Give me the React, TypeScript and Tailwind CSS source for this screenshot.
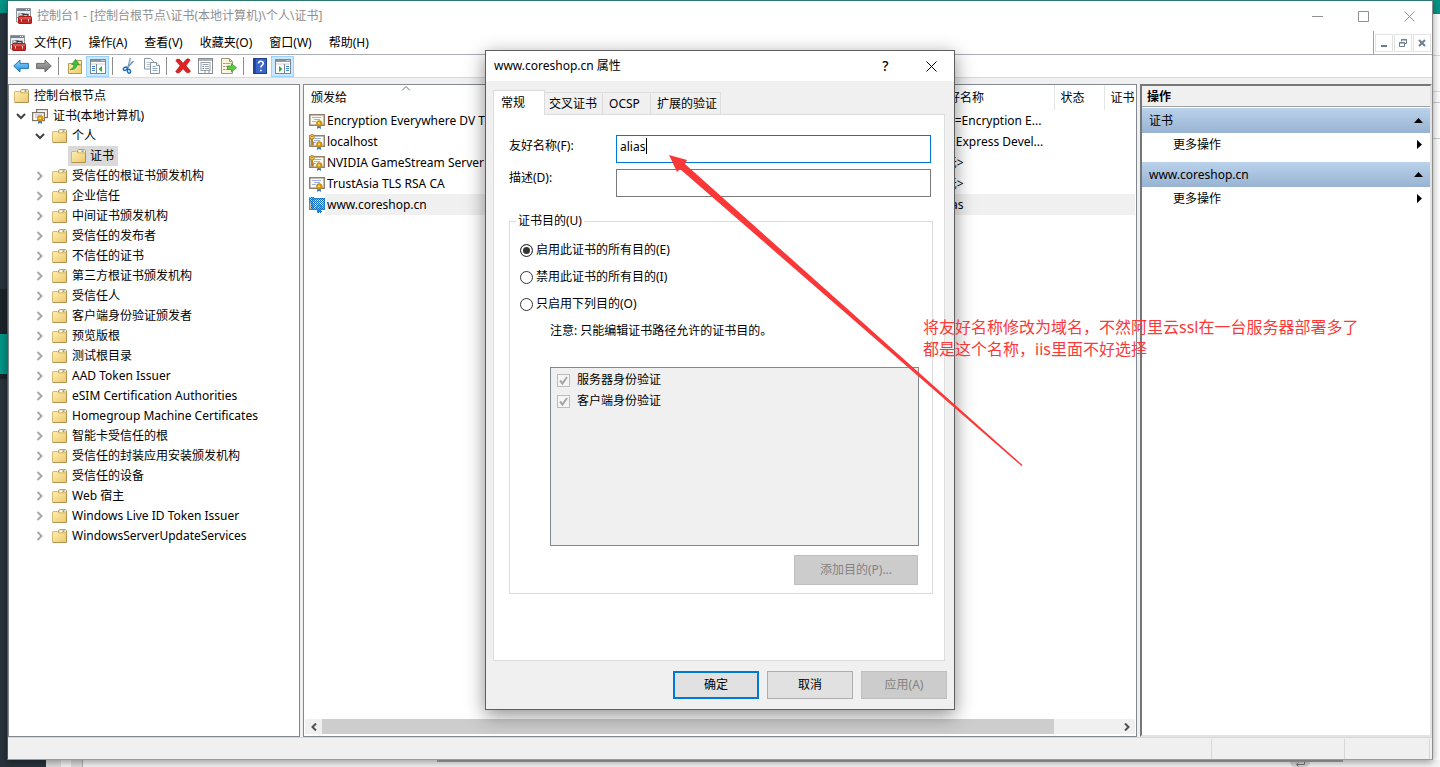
import React from "react";

type IconProps = { className?: string };

const Chevron = ({ open }: { open: boolean }) => (
  <svg viewBox="0 0 10 10" className="h-[10px] w-[10px]" fill="none" strokeWidth="2">
    {open ? <path d="M1 3l4 4 4-4" stroke="#404040" /> : <path d="M2.5 1l4 4-4 4" stroke="#a6a6a6" />}
  </svg>
);

const FolderIcon = () => (
  <svg viewBox="0 0 15 14" className="h-[14px] w-[15px] shrink-0">
    <path d="M6.500 3.500V1.500l1-1h6l1 1v4h-8z" fill="#efd892" stroke="#b9a063" />
    <path d="M8 2.200h5.500" stroke="#fff" strokeWidth="1.400" />
    <path d="M10.500 2.200h2" stroke="#4f95e0" strokeWidth="1.400" />
    <path d="M1 2.500h4.500l1.300 1.500H14v9H1z" fill="url(#folderFace)" />
    <path d="M.5 13V3l.5-.5h4.500L6.800 4H14" fill="none" stroke="#d6b870" />
    <path d="M14.500 4.500v9H.500" fill="none" stroke="#b0924e" />
  </svg>
);

const Seal = () => (
  <>
    <path d="M8.500 12l-.5 4 2-1.300 2 1.300-.3-4z" fill="#1f6fe0" />
    <circle cx="10.300" cy="10.500" r="2.900" fill="#d99a0c" stroke="#b67a08" strokeWidth=".6" />
    <circle cx="10" cy="10.200" r="1" fill="#ffe07a" />
  </>
);

const CertIcon = ({ keyed = false, selected = false }: { keyed?: boolean; selected?: boolean }) => (
  <svg viewBox="0 0 16 16" className="h-4 w-4 shrink-0">
    <rect x=".75" y="1.750" width="14.500" height="10.500" fill="#fbfaf3" stroke="#8f8370" strokeWidth="1.500" />
    <path d="M3 4.500h9M5 6.500h6M3 8.500h4" stroke="#a4b0dc" strokeWidth="1" />
    <Seal />
    {keyed && (
      <>
        <path d="M3 4v7.500M3 8.500h1.800M3 10.500h1.800" stroke="#b57d14" strokeWidth="1.800" />
        <circle cx="3" cy="2.800" r="2.300" fill="#f7d779" stroke="#b57d14" />
        <circle cx="3" cy="2.400" r=".7" fill="#6b4a08" />
      </>
    )}
    {selected && <path d="M1 0h4l1 1h10v12h-3v3H8v-3H2V6L0 4V1z" fill="url(#selectedDots)" />}
  </svg>
);

const CertStoreIcon = () => (
  <svg viewBox="0 0 16 16" className="h-4 w-4 shrink-0">
    <rect x="4.600" y="1.600" width="10.800" height="8" fill="#fbfaf3" stroke="#80776a" strokeWidth="1.200" />
    <rect x=".6" y="4.600" width="11.800" height="8" fill="#fbfaf3" stroke="#80776a" strokeWidth="1.200" />
    <path d="M3 7h7M3 9h4" stroke="#a4b0dc" />
    <g transform="translate(-2 0)">
      <Seal />
    </g>
  </svg>
);

const ConsoleIcon = ({ className = "" }: IconProps) => (
  <svg viewBox="0 0 16 16" className={`h-4 w-4 shrink-0 ${className}`}>
    <path d="M.5.500h14v9H.500z" fill="#e9edf0" stroke="#8b959d" />
    <path d="M.5 9v5h2" fill="none" stroke="#8b959d" />
    <path d="M1 2h13" stroke="#75828d" strokeWidth="2" />
    <path d="M10 1.500h1M12 1.500h1" stroke="#fff" />
    <path d="M3 5v5M4.500 5.500h4M4 8l2-1" stroke="#77838d" fill="none" />
    <path d="M7 8.500V6.500h5v2" fill="none" stroke="#3c3c3c" strokeWidth="1.300" />
    <path d="M2 9.500L3 8h12l1 1.500V15l-1 1H3l-1-1z" fill="#a31d1b" />
    <path d="M3 9h12v2.500H3z" fill="#e0524b" />
    <path d="M3 12.500h12V15H3z" fill="#c42a26" />
    <path d="M5.500 11v2.500M12.500 11v2.500" stroke="#e9d6d6" />
  </svg>
);

const ArrowIcon = ({ back }: { back: boolean }) => (
  <svg viewBox="0 0 16 14" className="h-[14px] w-4">
    {back ? (
      <path d="M.7 7L7 1v3.400h8.400v5.200H7V13z" fill="url(#blueArrow)" stroke="#2476b8" />
    ) : (
      <path d="M15.300 7L9 1v3.400H.6v5.200H9V13z" fill="url(#greyArrow)" stroke="#6d6d6d" />
    )}
  </svg>
);

const FolderUpIcon = () => (
  <svg viewBox="0 0 16 16" className="h-4 w-4">
    <path d="M8.500 6V4l1-1.500h5V7h-6z" fill="#f4e3ac" stroke="#b99a52" />
    <path d="M1.500 5.500h5l1 1.500h7v8.500h-13z" fill="url(#folderFace)" stroke="#b99a52" />
    <path d="M3 11.500c2.700-.8 4-2.500 3.900-5H4.600L8.600 1.300l3.600 5.200H9.800c0 3.700-2.500 5.400-6.800 5z" fill="#3fc23a" stroke="#1f8c22" strokeWidth=".6" />
  </svg>
);

const PaneIcon = ({ left }: { left: boolean }) => (
  <svg viewBox="0 0 16 15" className="h-[15px] w-4">
    <rect x=".5" y=".5" width="15" height="14" fill="#fff" stroke="#7e8791" />
    <path d="M1 2h14" stroke="#8d969f" strokeWidth="2" />
    <path d="M11.500 1.500h1M13.500 1.500h1" stroke="#fff" />
    <path d="M1 5h14" stroke="#c9ced3" />
    {left ? (
      <>
        <path d="M6.500 5v9.500" stroke="#7e8791" />
        <path d="M2 7.500h3M2 9.500h3M2 11.500h3" stroke="#3c83cf" />
        <path d="M12 7v6L8.500 10z" fill="#38a838" />
      </>
    ) : (
      <>
        <path d="M9.500 5v9.500" stroke="#7e8791" />
        <path d="M11 7.500h3M11 9.500h3M11 11.500h3" stroke="#3c83cf" />
        <path d="M4 7v6l3.500-3z" fill="#38a838" />
      </>
    )}
  </svg>
);

const CutIcon = () => (
  <svg viewBox="0 0 16 16" className="h-4 w-4" fill="none">
    <path d="M9.500 0L7 10M12.500 3L5.500 10.500" stroke="#7d9ab5" strokeWidth="1.700" />
    <path d="M9.700 1L8.500 6" stroke="#cfdde9" strokeWidth=".8" />
    <ellipse cx="4.300" cy="10.800" rx="2" ry="1.500" transform="rotate(-25 4.300 10.800)" stroke="#1f6db8" strokeWidth="1.500" />
    <ellipse cx="8" cy="13.200" rx="1.500" ry="2" transform="rotate(-20 8 13.200)" stroke="#1f6db8" strokeWidth="1.500" />
  </svg>
);

const CopyIcon = () => (
  <svg viewBox="0 0 16 16" className="h-4 w-4" fill="#fff" stroke="#8793a0">
    <path d="M.5.500h6l3 3v7.500h-9z" />
    <path d="M2.500 4.500h4M2.500 6.500h5M2.500 8.500h5" stroke="#b7c3cf" />
    <path d="M6.500 4.500h6l3 3v8h-9z" />
    <path d="M12.500 4.500v3h3" />
    <path d="M8.500 8.500h3M8.500 10.500h5M8.500 12.500h5" stroke="#8ba6c2" />
  </svg>
);

const DeleteIcon = () => (
  <svg viewBox="0 0 16 16" className="h-4 w-4">
    <path d="M.8 2.500C2.500.6 4 .8 5.200 2L8 5.200 11.500 1.300c1-.8 2.700-.5 3.700.8L11 7.800l4.500 5.200c-1 2-2.700 2.200-4 1.400L8 10.800l-3.500 3.800c-1.200.8-2.900.4-3.800-1.200l4.400-5.600z" fill="#e02222" stroke="#a51212" strokeWidth=".6" />
  </svg>
);

const PropertiesIcon = () => (
  <svg viewBox="0 0 16 16" className="h-4 w-4" fill="none">
    <rect x=".5" y=".5" width="14" height="15" fill="#fff" stroke="#858b91" />
    <path d="M1 2h13" stroke="#aeb4ba" strokeWidth="2" />
    <rect x="3" y="4.500" width="9" height="8" stroke="#9aa3ab" />
    <path d="M4.500 6.500h6M7 8.500h4M7 10.500h4" stroke="#9aa3ab" />
    <path d="M4.500 8.500h1.500M4.500 10.500h1.500" stroke="#3c83cf" />
    <path d="M6 14h2M10 14h2" stroke="#8b9299" />
  </svg>
);

const ExportIcon = () => (
  <svg viewBox="0 0 16 16" className="h-4 w-4" fill="none">
    <path d="M.5.500h8l3 3v12H.500z" fill="#fbf6dc" stroke="#a0987c" />
    <path d="M8.500.500v3h3" stroke="#a0987c" />
    <path d="M2.500 5.500h1M2.500 8.500h1M2.500 11.500h1" stroke="#3f3f3f" />
    <path d="M4.500 5.500h5M4.500 8.500h3M4.500 11.500h3" stroke="#9aa3ab" />
    <path d="M6.500 8h4V5.500l5 4.300-5 4.200v-2.500h-4z" fill="#5dcb43" stroke="#2e9427" strokeWidth=".7" />
  </svg>
);

const HelpIcon = () => (
  <svg viewBox="0 0 14 16" className="h-4 w-[14px]" fill="none">
    <rect x=".5" y=".5" width="13" height="15" fill="#3a64c8" stroke="#1f3f8f" />
    <path d="M2 1v14" stroke="#1f3f8f" strokeWidth="1.500" />
    <path d="M5.500 5.500c.2-3 5-2.800 4.700 0-.2 1.800-2.300 1.900-2.300 4" stroke="#fff" strokeWidth="1.600" />
    <path d="M7 12.500h1.800" stroke="#fff" strokeWidth="1.700" />
  </svg>
);

const Defs = () => (
  <svg className="absolute h-0 w-0" aria-hidden="true">
    <defs>
      <linearGradient id="folderFace" x1="0" y1="0" x2="1" y2="1">
        <stop offset="0" stopColor="#fdeeb2" />
        <stop offset="1" stopColor="#eec96c" />
      </linearGradient>
      <linearGradient id="blueArrow" x1="0" y1="0" x2="0" y2="1">
        <stop offset="0" stopColor="#8fd6fb" />
        <stop offset="1" stopColor="#1e8be0" />
      </linearGradient>
      <linearGradient id="greyArrow" x1="0" y1="0" x2="0" y2="1">
        <stop offset="0" stopColor="#b0b0b0" />
        <stop offset="1" stopColor="#6f6f6f" />
      </linearGradient>
      <pattern id="selectedDots" width="2" height="2" patternUnits="userSpaceOnUse">
        <rect width="1" height="1" fill="#0f6fc0" />
        <rect x="1" y="1" width="1" height="1" fill="#0f6fc0" />
      </pattern>
    </defs>
  </svg>
);

const menus = ["文件(F)", "操作(A)", "查看(V)", "收藏夹(O)", "窗口(W)", "帮助(H)"];

const stores = [
  "受信任的根证书颁发机构",
  "企业信任",
  "中间证书颁发机构",
  "受信任的发布者",
  "不信任的证书",
  "第三方根证书颁发机构",
  "受信任人",
  "客户端身份验证颁发者",
  "预览版根",
  "测试根目录",
  "AAD Token Issuer",
  "eSIM Certification Authorities",
  "Homegroup Machine Certificates",
  "智能卡受信任的根",
  "受信任的封装应用安装颁发机构",
  "受信任的设备",
  "Web 宿主",
  "Windows Live ID Token Issuer",
  "WindowsServerUpdateServices",
];

const certificates = [
  { name: "Encryption Everywhere DV T", friendly: "CN=Encryption E...", keyed: false, selected: false },
  { name: "localhost", friendly: "IIS Express Devel...", keyed: true, selected: false },
  { name: "NVIDIA GameStream Server", friendly: "<无>", keyed: true, selected: false },
  { name: "TrustAsia TLS RSA CA", friendly: "<无>", keyed: false, selected: false },
  { name: "www.coreshop.cn", friendly: "alias", keyed: true, selected: true },
];

function ToolButton({ label, active = false, children }: { label: string; active?: boolean; children: React.ReactNode }) {
  return (
    <button
      type="button"
      aria-label={label}
      className={
        active
          ? "flex h-[21px] w-[23px] items-center justify-center border border-[#99d1ff] bg-[#cce8ff]"
          : "flex h-[21px] w-[23px] items-center justify-center"
      }
    >
      {children}
    </button>
  );
}

const Separator = () => <span className="ml-[3px] mr-1 h-[18px] w-px bg-[#8c8c8c]" />;

function TitleBar() {
  return (
    <header className="flex h-[30px] items-center bg-white pl-2 text-[#8f8f8f]">
      <ConsoleIcon />
      <h1 className="ml-[5px] flex-1">控制台1 - [控制台根节点\证书(本地计算机)\个人\证书]</h1>
      <button type="button" aria-label="最小化" className="flex h-full w-[46px] items-center justify-center">
        <svg viewBox="0 0 11 11" className="h-[11px] w-[11px]" stroke="#8f8f8f"><path d="M0 5.500h11" /></svg>
      </button>
      <button type="button" aria-label="最大化" className="flex h-full w-[46px] items-center justify-center">
        <svg viewBox="0 0 11 11" className="h-[11px] w-[11px]" fill="none" stroke="#8f8f8f"><path d="M.5.500h10v10H.500z" /></svg>
      </button>
      <button type="button" aria-label="关闭" className="flex h-full w-[46px] items-center justify-center">
        <svg viewBox="0 0 11 11" className="h-[11px] w-[11px]" stroke="#8f8f8f"><path d="M.5.500l10 10M10.500.500l-10 10" /></svg>
      </button>
    </header>
  );
}

function MenuBar() {
  const box = "flex h-[18px] w-[18px] items-center justify-center border border-[#e3e3e3] bg-white";
  return (
    <div className="flex h-6 items-stretch border-b border-[#acacb4] bg-white pl-[2px]">
      <ConsoleIcon className="self-center" />
      <nav className="ml-2 flex flex-1 items-center gap-[17px]">
        {menus.map((m) => (
          <button type="button" key={m}>{m}</button>
        ))}
      </nav>
      <div className="flex items-center gap-px border-l border-[#a0a0a0] px-px">
        <button type="button" aria-label="最小化子窗口" className={box}>
          <svg viewBox="0 0 8 8" className="h-2 w-2" stroke="#6c7f91" strokeWidth="2"><path d="M1 7h6" /></svg>
        </button>
        <button type="button" aria-label="还原子窗口" className={box}>
          <svg viewBox="0 0 8 8" className="h-2 w-2" fill="none" stroke="#6c7f91">
            <path d="M2.500 2.500v-2h5v4h-2M2 1h6M.5 3.500h5v4h-5zM.500 4h5" />
          </svg>
        </button>
        <button type="button" aria-label="关闭子窗口" className={box}>
          <svg viewBox="0 0 8 8" className="h-2 w-2" stroke="#6c7f91" strokeWidth="2"><path d="M1 1l6 6M7 1L1 7" /></svg>
        </button>
      </div>
    </div>
  );
}

function ToolBar() {
  return (
    <div className="flex h-[23px] items-center border-b border-[#d9d9d9] bg-white pl-px">
      <ToolButton label="后退"><ArrowIcon back /></ToolButton>
      <ToolButton label="前进"><ArrowIcon back={false} /></ToolButton>
      <Separator />
      <ToolButton label="向上一级"><FolderUpIcon /></ToolButton>
      <ToolButton label="显示控制台树" active><PaneIcon left /></ToolButton>
      <Separator />
      <ToolButton label="剪切"><CutIcon /></ToolButton>
      <ToolButton label="复制"><CopyIcon /></ToolButton>
      <Separator />
      <ToolButton label="删除"><DeleteIcon /></ToolButton>
      <ToolButton label="属性"><PropertiesIcon /></ToolButton>
      <ToolButton label="导出列表"><ExportIcon /></ToolButton>
      <Separator />
      <ToolButton label="帮助"><HelpIcon /></ToolButton>
      <ToolButton label="显示操作窗格" active><PaneIcon left={false} /></ToolButton>
    </div>
  );
}

function TreePane() {
  return (
    <section className="w-[292px] shrink-0 border border-[#828790] bg-white pt-px" aria-label="控制台树">
      <ul className="leading-5">
        <li className="flex h-5 items-center gap-[5px] pl-[5px]"><FolderIcon />控制台根节点</li>
        <li className="flex h-5 items-center pl-[7px]">
          <Chevron open />
          <span className="ml-[6px] mr-[5px]"><CertStoreIcon /></span>证书(本地计算机)
        </li>
        <li className="flex h-5 items-center pl-[26px]">
          <Chevron open />
          <span className="ml-[7px] mr-[5px]"><FolderIcon /></span>个人
        </li>
        <li className="flex h-5 items-center pl-[59px]">
          <span className="flex h-5 items-center gap-1 bg-[#d9d9d9] pl-[3px] pr-1"><FolderIcon />证书</span>
        </li>
        {stores.map((s) => (
          <li key={s} className="flex h-5 items-center pl-[26px]">
            <Chevron open={false} />
            <span className="ml-[7px] mr-[5px]"><FolderIcon /></span>{s}
          </li>
        ))}
      </ul>
    </section>
  );
}

function ListPane() {
  return (
    <section className="flex min-w-0 flex-1 flex-col border border-[#828790] bg-white px-px pb-[2px]" aria-label="证书列表">
      <div className="min-h-0 flex-1 overflow-hidden">
        <table className="w-full table-fixed border-collapse whitespace-nowrap text-left">
          <colgroup>
            <col className="w-[201px]" />
            <col />
            <col className="w-[125px]" />
            <col className="w-[50px]" />
            <col className="w-[31px]" />
          </colgroup>
          <thead>
            <tr className="h-[25px]">
              <th className="relative pl-[6px] font-normal">
                颁发给
                <svg viewBox="0 0 9 5" className="absolute left-1/2 top-px h-[5px] w-[9px] -translate-x-1/2" fill="none" stroke="#6d6d6d">
                  <path d="M.5 4.500l4-4 4 4" />
                </svg>
              </th>
              <th />
              <th className="border-r border-[#e5e5e5] pl-[7px] font-normal">友好名称</th>
              <th className="border-r border-[#e5e5e5] pl-[6px] font-normal">状态</th>
              <th className="pl-[6px] font-normal">证书</th>
            </tr>
          </thead>
          <tbody>
            {certificates.map((c) => {
              const shade = c.selected ? "bg-[#f0f0f0]" : "";
              return (
                <tr key={c.name} className="h-[21px]">
                  <td className="p-0">
                    <div className="flex h-[21px] items-center pl-1">
                      <CertIcon keyed={c.keyed} selected={c.selected} />
                      <span className={`flex h-[21px] min-w-0 flex-1 items-center overflow-hidden pl-[2px] ${shade}`}>{c.name}</span>
                    </div>
                  </td>
                  <td className={shade} />
                  <td className={`py-0 pl-[9px] ${shade}`}>{c.friendly}</td>
                  <td className={shade} />
                  <td className={shade} />
                </tr>
              );
            })}
          </tbody>
        </table>
      </div>
      <div className="flex h-[15px] items-center bg-[#f0f0f0]">
        <button type="button" aria-label="向左滚动" className="flex w-[17px] justify-center">
          <svg viewBox="0 0 8 8" className="h-2 w-2" fill="none" stroke="#505050" strokeWidth="2"><path d="M6 .5L2.500 4 6 7.500" /></svg>
        </button>
        <div className="h-full flex-1"><div className="h-full w-[92%] bg-[#cdcdcd]" /></div>
        <button type="button" aria-label="向右滚动" className="flex w-[17px] justify-center">
          <svg viewBox="0 0 8 8" className="h-2 w-2" fill="none" stroke="#505050" strokeWidth="2"><path d="M2 .5L5.500 4 2 7.500" /></svg>
        </button>
      </div>
    </section>
  );
}

function ActionGroup({ title }: { title: string }) {
  return (
    <div className="mb-[6px]">
      <button type="button" className="flex h-[25px] w-full items-center justify-between bg-linear-to-b from-[#bad2eb] to-[#98b3d2] pl-[7px] pr-[7px]">
        {title}
        <svg viewBox="0 0 9 5" className="h-[5px] w-[9px]"><path d="M0 5L4.500 0 9 5z" /></svg>
      </button>
      <button type="button" className="flex h-[23px] w-full items-center justify-between pl-[31px] pr-2">
        更多操作
        <svg viewBox="0 0 5 9" className="h-[9px] w-[5px]"><path d="M0 0l5 4.500L0 9z" /></svg>
      </button>
    </div>
  );
}

function ActionsPane() {
  return (
    <section className="w-[292px] shrink-0 border-2 border-b-[#e3e3e3] border-l-[#777] border-r-[#e3e3e3] border-t-[#777] bg-white">
      <h2 className="mb-px flex h-[21px] items-center border-b border-[#a0a0a0] bg-[#f0f0f0] pl-[5px] pt-[2px] font-bold">操作</h2>
      <ActionGroup title="证书" />
      <ActionGroup title="www.coreshop.cn" />
    </section>
  );
}

function PropertiesDialog() {
  const tab = "-mb-px flex h-[23px] items-center border border-b-[#dcdcdc] border-l-0 border-[#dcdcdc] bg-[#f0f0f0]";
  return (
    <div role="dialog" aria-label="www.coreshop.cn 属性" className="flex w-full flex-col border border-[#5f5f5f] bg-[#f0f0f0] shadow-[0_5px_18px_rgba(0,0,0,0.45)]">
      <div className="flex h-[30px] items-center bg-white pl-2">
        <h2 className="flex-1">www.coreshop.cn 属性</h2>
        <button type="button" aria-label="帮助" className="w-[45px] text-sm font-medium">?</button>
        <button type="button" aria-label="关闭" className="flex w-[46px] justify-center">
          <svg viewBox="0 0 11 11" className="h-[11px] w-[11px]" stroke="#000"><path d="M.5.500l10 10M10.500.500l-10 10" /></svg>
        </button>
      </div>
      <div className="flex flex-col px-[7px] pt-[9px]">
        <div role="tablist" className="flex items-end">
          <button type="button" role="tab" aria-selected="true" className="relative z-10 -mb-px flex h-[25px] w-[52px] items-center border border-b-0 border-[#dcdcdc] bg-white pb-px pl-[7px]">常规</button>
          <button type="button" role="tab" aria-selected="false" className={`${tab} pl-1 pr-[5px]`}>交叉证书</button>
          <button type="button" role="tab" aria-selected="false" className={`${tab} w-12 pl-[6px]`}>OCSP</button>
          <button type="button" role="tab" aria-selected="false" className={`${tab} pl-[6px] pr-[3px]`}>扩展的验证</button>
        </div>
        <div role="tabpanel" className="mr-[2px] h-[547px] border border-[#dcdcdc] bg-white pl-[15px] pr-[11px] pt-5">
          <div className="flex h-7 pr-[2px]">
            <label htmlFor="friendly" className="w-[107px] leading-[22px]">友好名称(F):</label>
            <div className="relative flex flex-1">
              <input id="friendly" defaultValue="alias" className="w-full border border-[#0078d7] bg-white pb-[5px] pl-[3px] outline-none" />
              <span className="absolute left-[30px] top-[3px] h-4 w-px bg-black" />
            </div>
          </div>
          <div className="mt-[6px] flex h-7 pr-[2px]">
            <label htmlFor="description" className="w-[107px] leading-[18px]">描述(D):</label>
            <input id="description" className="flex-1 border border-[#7a7a7a] bg-white pl-[3px] outline-none" />
          </div>
          <fieldset className="mt-[15px] h-[382px] border border-[#dcdcdc] px-[10px]">
            <legend className="-ml-1 px-[2px] leading-[18px]">证书目的(U)</legend>
            <div className="mt-[11px] flex flex-col gap-[9px]">
              {["启用此证书的所有目的(E)", "禁用此证书的所有目的(I)", "只启用下列目的(O)"].map((r, i) => (
                <label key={r} className="flex h-[18px] items-center gap-[3px]">
                  <input type="radio" name="purpose" defaultChecked={i === 0} className="h-[13px] w-[13px] appearance-none rounded-full border border-[#333] bg-white checked:bg-[#333] checked:shadow-[inset_0_0_0_2px_white]" />
                  {r}
                </label>
              ))}
            </div>
            <div className="ml-[30px] mr-[3px] mt-[9px]">
              <p className="leading-[18px]">注意: 只能编辑证书路径允许的证书目的。</p>
              <div className="mt-[27px] flex h-[179px] flex-col gap-[3px] border border-[#828790] bg-[#f0f0f0] py-[3px] pl-[6px]">
                {["服务器身份验证", "客户端身份验证"].map((p) => (
                  <label key={p} className="flex h-[18px] items-center gap-[7px]">
                    <span className="relative flex">
                      <input type="checkbox" defaultChecked disabled className="h-[13px] w-[13px] appearance-none border border-[#bcbcbc] bg-[#f5f5f5]" />
                      <svg viewBox="0 0 13 13" className="absolute inset-0 h-[13px] w-[13px]" fill="none" stroke="#a6a6a6" strokeWidth="2"><path d="M3 6.500L5.500 9.500 10 3" /></svg>
                    </span>
                    {p}
                  </label>
                ))}
              </div>
              <div className="mt-[9px] flex justify-end pr-px">
                <button type="button" disabled className="h-[30px] w-[124px] border border-[#bfbfbf] bg-[#cccccc] text-[#838383]">添加目的(P)...</button>
              </div>
            </div>
          </fieldset>
        </div>
        <div className="flex h-12 items-start justify-end gap-2 pt-[10px]">
          <button type="button" className="h-7 w-[86px] border-2 border-[#0078d7] bg-[#e1e1e1]">确定</button>
          <button type="button" className="h-7 w-[86px] border border-[#adadad] bg-[#e1e1e1]">取消</button>
          <button type="button" disabled className="h-7 w-[86px] border border-[#bfbfbf] bg-[#cccccc] text-[#838383]">应用(A)</button>
        </div>
      </div>
    </div>
  );
}

export default function App() {
  return (
    <div className="relative flex h-screen flex-col overflow-hidden bg-[#f5f5f5] font-['Noto_Sans','Noto_Sans_CJK_SC',sans-serif] text-xs text-black">
      <Defs />
      <div className="flex min-h-0 flex-1">
        <div className="flex w-[7px] shrink-0 flex-col bg-[#28333d]">
          <div className="h-[13px] bg-[#009688]" />
          <div className="mt-[276px] h-[45px] bg-[#1c2329]" />
          <div className="h-10 bg-[#009688]" />
          <div className="h-[5px] bg-[#1c2329]" />
        </div>
        <main className="z-10 flex min-w-0 flex-1 flex-col border border-b-[#9a9a9a] border-l-[#4f555b] border-r-[#8a8a8a] border-t-[#2a786f] bg-[#f0f0f0] shadow-[0_2px_8px_rgba(0,0,0,0.4)]">
          <TitleBar />
          <MenuBar />
          <ToolBar />
          <div className="flex min-h-0 flex-1 gap-[3px] pt-[6px]">
            <TreePane />
            <ListPane />
            <ActionsPane />
          </div>
          <footer className="flex h-[22px] justify-end border-t border-[#d7d7d7] pr-[2px] pt-px">
            <span className="w-[133px] border-l border-[#d7d7d7]" />
            <span className="w-[86px] border-x border-[#d7d7d7]" />
          </footer>
        </main>
        <div className="flex w-[7px] shrink-0 flex-col bg-white">
          <div className="h-[14px] bg-[#009688]" />
          <div className="mt-[41px] h-[37px] border-y border-[#dcdcdc]" />
          <div className="mt-[10px] h-[37px] border-y border-[#cccccc]" />
        </div>
      </div>
      <div className="flex h-[7px]">
        <div className="w-[46px] bg-[#28333d]" />
        <div className="w-[15px] bg-[#dedede]" />
        <div className="w-[10px] bg-[#f5f5f5]" />
        <div className="w-3 border-r border-[#b0b0b0] bg-[#dedede]" />
        <div className="w-[354px]" />
        <div className="flex flex-1 items-start justify-end border-t-2 border-[#a8a8a8] pr-[33px]">
          <span className="flex h-[5px] w-5 justify-center rounded-b-full bg-[#d4d4d4]">
            <svg viewBox="0 0 10 5" className="h-[5px] w-[10px]" fill="none" stroke="#777"><path d="M9.500 0v2.500h-8M3.500.500l-2 2 2 2" /></svg>
          </span>
        </div>
        <div className="w-[97px]" />
      </div>

      <div className="absolute inset-x-0 top-[50px] z-20 mx-auto w-[470px]">
        <PropertiesDialog />
        <svg viewBox="0 0 355 312" className="pointer-events-none absolute left-[184px] top-[105px] z-10 h-[312px] w-[355px]">
          <path d="M0 0L18 5L16 9L353.500 310L352.500 311L11 14L8 17z" fill="#fb3838" />
        </svg>
        <p className="absolute left-[438px] top-[266px] z-10 whitespace-nowrap text-base leading-[22px] text-[#fb3838]">
          将友好名称修改为域名，不然阿里云ssl在一台服务器部署多了
          <br />
          都是这个名称，iis里面不好选择
        </p>
      </div>
    </div>
  );
}
